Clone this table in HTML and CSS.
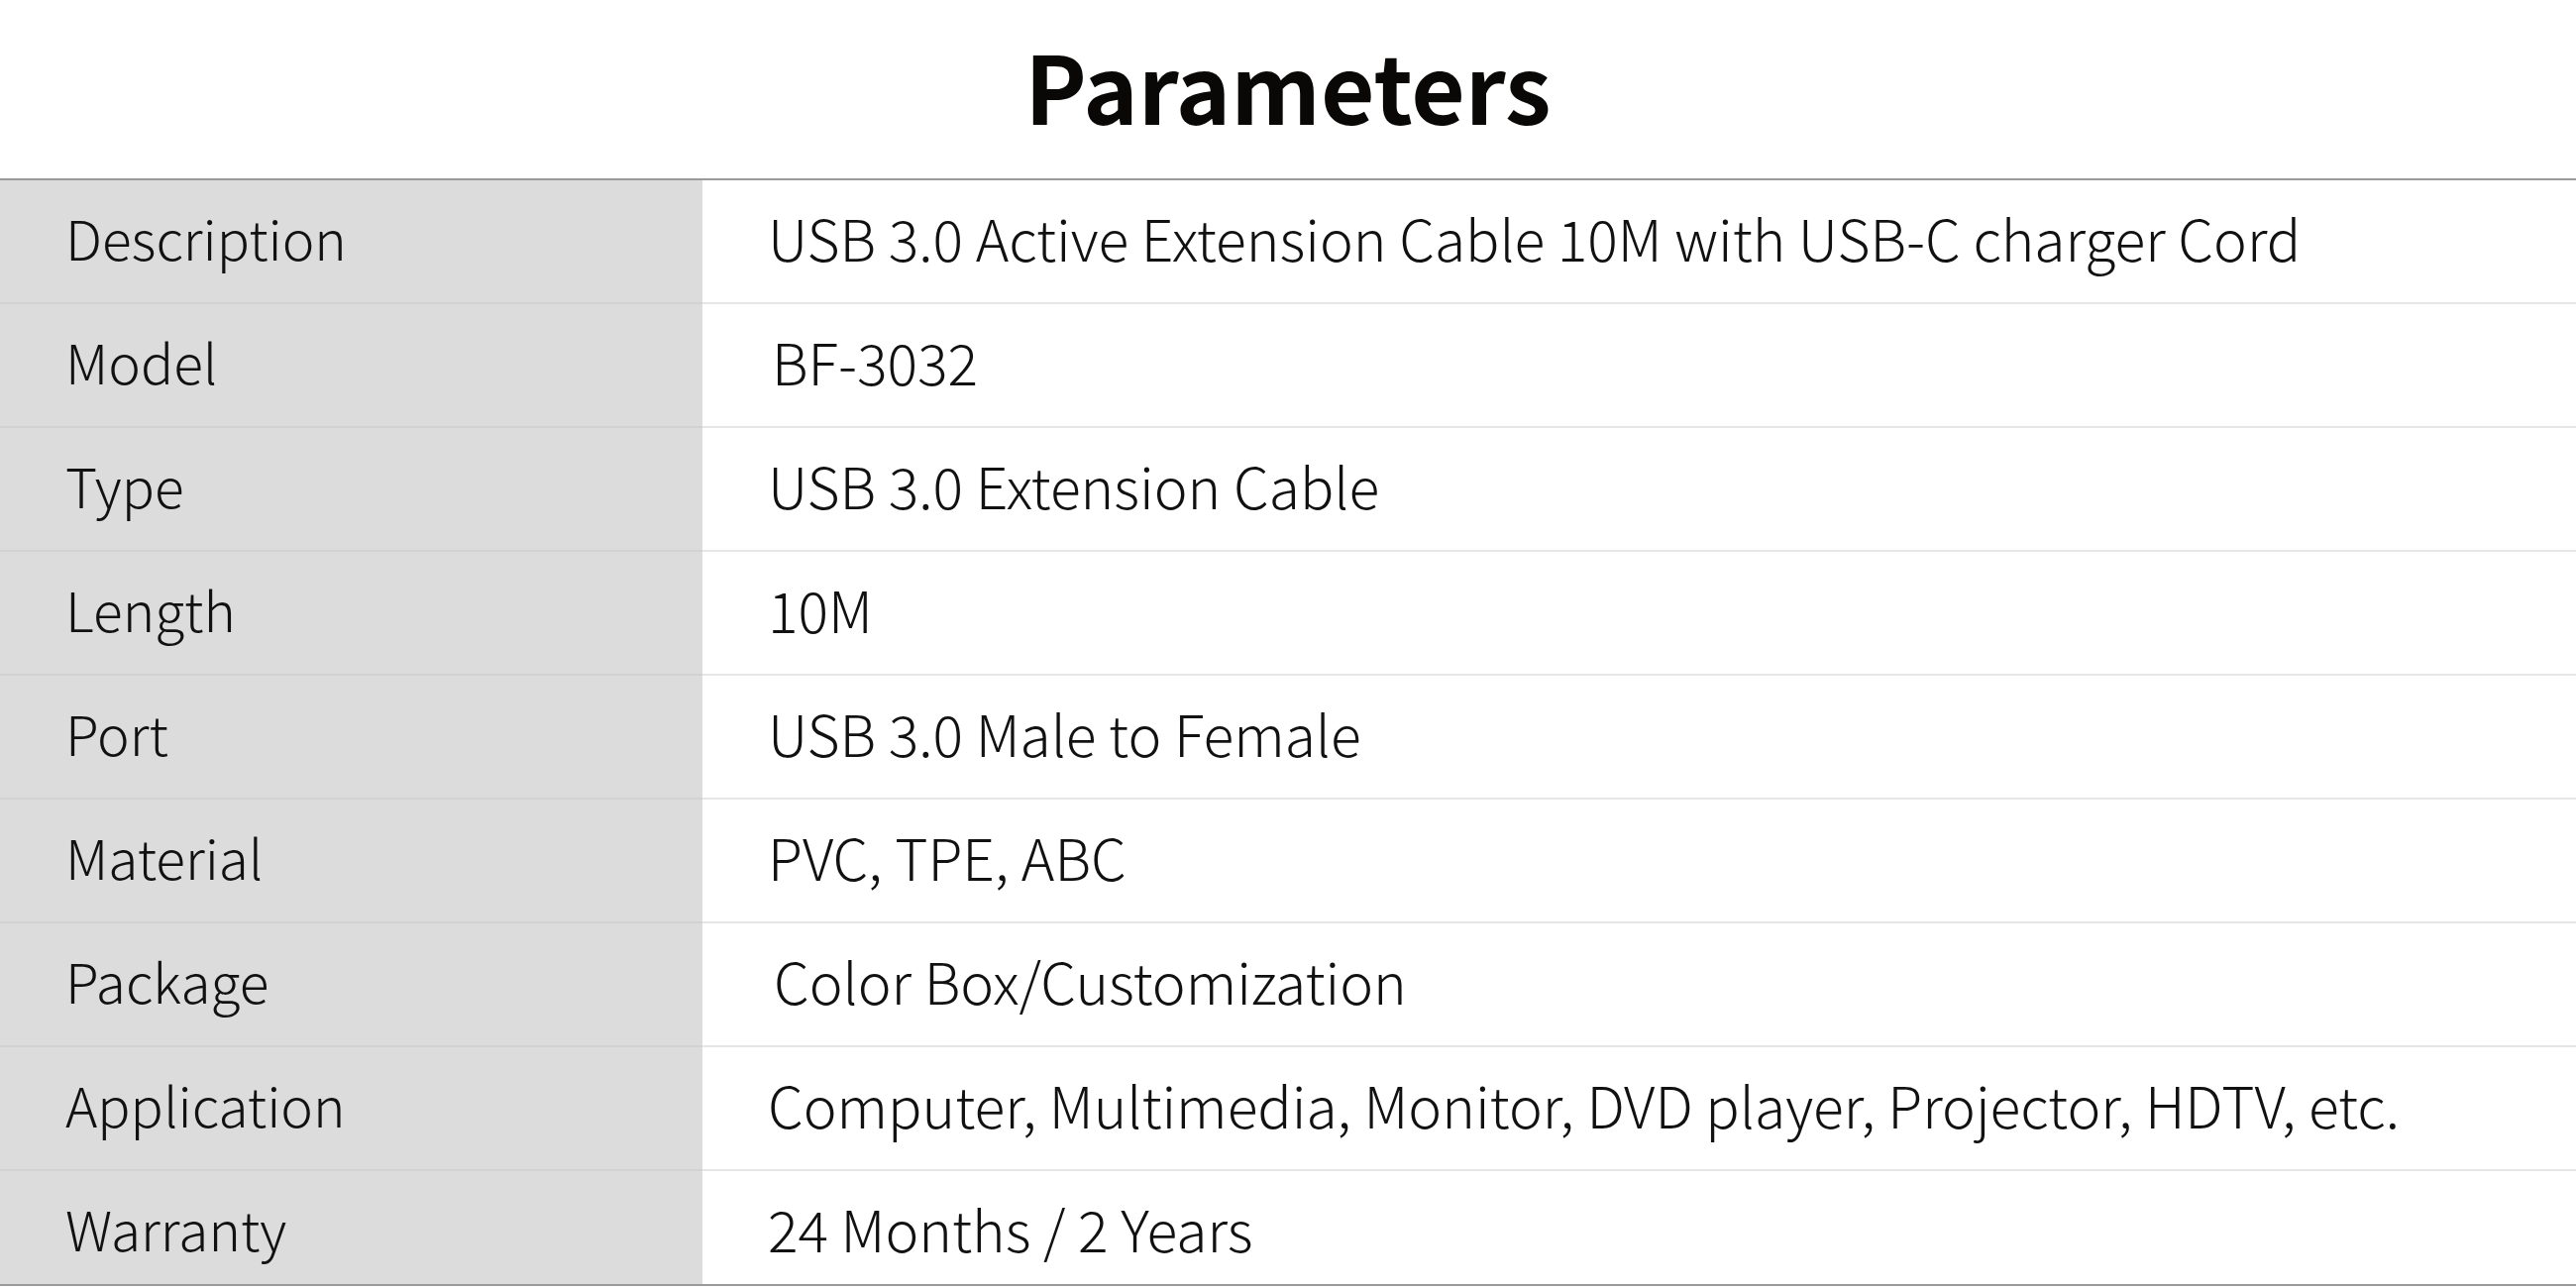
FILE: index.html
```html
<!DOCTYPE html>
<html lang="en">
<head>
<meta charset="utf-8">
<title>Parameters</title>
<link rel="stylesheet" href="styles.css">
</head>
<body>
<div class="page">
  <header class="title-bar">
    <h1 class="title">Parameters</h1>
  </header>
  <div class="table">
    <div class="row"><div class="label">Description</div><div class="value">USB 3.0 Active Extension Cable 10M with USB-C charger Cord</div></div>
    <div class="row"><div class="label">Model</div><div class="value value-shift-sm">BF-3032</div></div>
    <div class="row"><div class="label">Type</div><div class="value">USB 3.0 Extension Cable</div></div>
    <div class="row"><div class="label">Length</div><div class="value">10M</div></div>
    <div class="row"><div class="label">Port</div><div class="value">USB 3.0 Male to Female</div></div>
    <div class="row"><div class="label">Material</div><div class="value">PVC, TPE, ABC</div></div>
    <div class="row"><div class="label">Package</div><div class="value value-shift-md">Color Box/Customization</div></div>
    <div class="row"><div class="label">Application</div><div class="value">Computer, Multimedia, Monitor, DVD player, Projector, HDTV, etc.</div></div>
    <div class="row row-last"><div class="label">Warranty</div><div class="value">24 Months / 2 Years</div></div>
  </div>
</div>
</body>
</html>
```
FILE: styles.css
```css
* { box-sizing: border-box; }
html, body { margin: 0; padding: 0; background: #ffffff; }
body {
  font-family: "Noto Sans CJK JP", "Noto Sans", sans-serif;
  color: #111111;
}
.page { width: 2600px; height: 1300px; overflow: hidden; }
.title-bar {
  height: 182px;
  border-bottom: 2px solid #9a9a9a;
  display: flex;
  align-items: center;
  justify-content: center;
}
.title {
  margin: 0;
  font-size: 94px;
  font-weight: 700;
  color: #0a0807;
  line-height: 1;
  padding-bottom: 10px;
}
.table { display: flex; flex-direction: column; }
.row {
  display: grid;
  grid-template-columns: 709px 1fr;
  height: 125px;
}
.row-last { height: 116px; }
.label, .value {
  display: flex;
  align-items: center;
  font-weight: 300;
  line-height: 1;
  padding-bottom: 8px;
}
.label {
  font-size: 55px;
  background: #dcdcdc;
  padding-left: 66px;
  border-bottom: 2px solid #d2d2d2;
}
.value {
  font-size: 57px;
  padding-left: 66px;
  border-bottom: 2px solid #e6e6e6;
}
.value-shift-sm { padding-left: 70px; }
.value-shift-md { padding-left: 72px; }
.row-last .label, .row-last .value {
  border-bottom: 2px solid #9a9a9a;
  padding-bottom: 0;
}
```
